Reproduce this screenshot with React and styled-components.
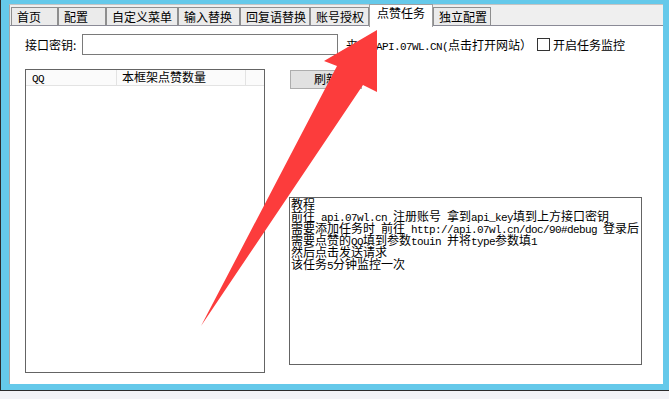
import React from "react"
import styled, { createGlobalStyle } from "styled-components"

const GlobalStyle = createGlobalStyle`
  html, body {
    margin: 0;
    padding: 0;
    background: #f2f3f7;
    font-family: "Noto Sans CJK SC", "Noto Sans", sans-serif;
    font-size: 12px;
    color: #000;
  }
`;

const Page = styled.div`
  position: relative;
  width: 669px;
  height: 399px;
  overflow: hidden;
`;

const Window = styled.div`
  box-sizing: border-box;
  width: 669px;
  height: 391px;
  display: flex;
  background: #65c9ea;
  border-left: 1px solid #2b2b2b;
  border-bottom: 1px solid #2b2b2b;
  padding: 4px 6px 6px 8px;
`;

const TabControl = styled.div`
  flex: 1;
  display: flex;
  flex-direction: column;
  border-left: 1px solid #a8a8a8;
  border-top: 1px solid #c4c4c4;
`;

const TabStrip = styled.div`
  display: flex;
  align-items: flex-end;
  height: 20px;
  padding-left: 1px;
  background: #efefef;
`;

const Tab = styled.div`
  box-sizing: border-box;
  width: ${p => p.$w}px;
  height: ${p => (p.$active ? 23 : 18)}px;
  margin-bottom: ${p => (p.$active ? -2 : 0)}px;
  padding-left: ${p => (p.$active ? 7 : 5)}px;
  line-height: ${p => (p.$active ? 16 : 17)}px;
  background: ${p => (p.$active ? "#ffffff" : "#ebebeb")};
  border: 1px solid ${p => (p.$active ? "#a0a0a0" : "#8e8e8e")};
  border-bottom: none;
  white-space: nowrap;
  position: relative;
  z-index: ${p => (p.$active ? 2 : 1)};
`;

const Panel = styled.div`
  flex: 1;
  background: #ffffff;
  border-top: 1px solid #8a8a96;
  padding: 8px 0 0 15px;
`;

const TopRow = styled.div`
  display: flex;
  align-items: center;
  height: 20px;
`;

const Label = styled.span`
  width: 55px;
  white-space: nowrap;
`;

const KeyInput = styled.div`
  box-sizing: border-box;
  width: 256px;
  height: 21px;
  margin-left: 2px;
  border: 1px solid #7a7a7a;
  background: #fff;
`;

const SiteLink = styled.span`
  margin-left: 8px;
  white-space: nowrap;
`;

const Mono = styled.span`
  font-family: "Liberation Mono", monospace;
  font-size: 11px;
  letter-spacing: -0.6px;
`;

const CheckWrap = styled.label`
  margin-left: 5px;
  display: flex;
  align-items: center;
  gap: 3px;
  white-space: nowrap;
`;

const CheckBox = styled.span`
  box-sizing: border-box;
  width: 13px;
  height: 13px;
  border: 1px solid #333;
  background: #fff;
`;

const Body = styled.div`
  display: flex;
  margin-top: 15px;
`;

const ListView = styled.div`
  box-sizing: border-box;
  width: 240px;
  height: 304px;
  border: 1px solid #646464;
  background: #fff;
`;

const ListHeader = styled.div`
  display: flex;
  height: 15px;
  background: #fbfbfb;
  border-bottom: 1px solid #e3e3e3;
`;

const HeadCell = styled.div`
  box-sizing: border-box;
  width: ${p => p.$w}px;
  padding-left: ${p => p.$pad}px;
  border-right: 1px solid #e3e3e3;
  line-height: 14px;
  white-space: nowrap;
`;

const RightCol = styled.div`
  display: flex;
  flex-direction: column;
  margin-left: 24px;
`;

const Button = styled.div`
  box-sizing: border-box;
  width: 72px;
  height: 19px;
  margin-top: 1px;
  margin-left: 1px;
  background: #e1e1e1;
  border: 1px solid #adadad;
  text-align: center;
  line-height: 16px;
`;

const Notes = styled.div`
  box-sizing: border-box;
  width: 353px;
  height: 168px;
  margin-top: 108px;
  border: 1px solid #646464;
  padding: 0 0 0 1px;
  line-height: 12px;
  background: #fff;
`;

const NoteLine = styled.div`
  height: 12px;
  white-space: nowrap;
`;

const Overlay = styled.svg`
  position: absolute;
  left: 0;
  top: 0;
  pointer-events: none;
`;

const tabs = [
  { name: "首页", w: 47 },
  { name: "配置", w: 48 },
  { name: "自定义菜单", w: 72 },
  { name: "输入替换", w: 62 },
  { name: "回复语替换", w: 70 },
  { name: "账号授权", w: 59 },
  { name: "点赞任务", w: 64, active: true },
  { name: "独立配置", w: 58 },
];

export default function App() {
  return (
    <Page>
      <GlobalStyle />
      <Window>
        <TabControl>
          <TabStrip>
            {tabs.map(t => (
              <Tab key={t.name} $w={t.w} $active={t.active}>
                {t.name}
              </Tab>
            ))}
          </TabStrip>
          <Panel>
            <TopRow>
              <Label>接口密钥:</Label>
              <KeyInput />
              <SiteLink>
                来自<Mono>:API.07WL.CN(</Mono>点击打开网站）
              </SiteLink>
              <CheckWrap>
                <CheckBox />
                开启任务监控
              </CheckWrap>
            </TopRow>
            <Body>
              <ListView>
                <ListHeader>
                  <HeadCell $w={91} $pad={6}><Mono>QQ</Mono></HeadCell>
                  <HeadCell $w={129} $pad={5}>本框架点赞数量</HeadCell>
                </ListHeader>
              </ListView>
              <RightCol>
                <Button>刷新</Button>
                <Notes>
                  <NoteLine>教程</NoteLine>
                  <NoteLine>
                    前往<Mono> api.07wl.cn </Mono>注册账号<Mono> </Mono>拿到<Mono>api_key</Mono>填到上方接口密钥
                  </NoteLine>
                  <NoteLine>
                    需要添加任务时<Mono> </Mono>前往<Mono> http://api.07wl.cn/doc/90#debug </Mono>登录后
                  </NoteLine>
                  <NoteLine>
                    需要点赞的<Mono>QQ</Mono>填到参数<Mono>touin </Mono>并将<Mono>type</Mono>参数填<Mono>1</Mono>
                  </NoteLine>
                  <NoteLine>然后点击发送请求</NoteLine>
                  <NoteLine>
                    该任务<Mono>5</Mono>分钟监控一次
                  </NoteLine>
                </Notes>
              </RightCol>
            </Body>
          </Panel>
        </TabControl>
      </Window>
      <Overlay width="669" height="399" viewBox="0 0 669 399">
        <polygon
          points="377,30 377,92 363,85 201,326 337,66 324,61"
          fill="#fc3c3c"
        />
      </Overlay>
    </Page>
  )
}
